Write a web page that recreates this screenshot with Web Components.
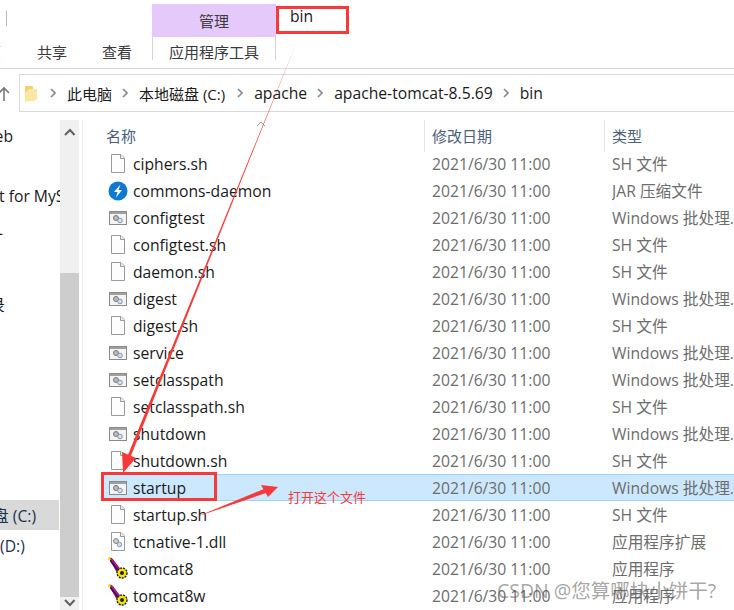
<!DOCTYPE html>
<html lang="zh">
<head>
<meta charset="utf-8">
<title>bin</title>
<style>
html, body { margin: 0; height: 610px; overflow: hidden; background: #fff; }
body { font: 15.7px "Open Sans", "Noto Sans CJK SC", sans-serif; color: #1a1a1a; position: relative; }
</style>
</head>
<body>
<explorer-ribbon></explorer-ribbon>
<explorer-address></explorer-address>
<explorer-main>
	<file-row icon="doc" type="SH 文件">ciphers.sh</file-row>
	<file-row icon="jar" type="JAR 压缩文件">commons-daemon</file-row>
	<file-row icon="bat" type="Windows 批处理...">configtest</file-row>
	<file-row icon="doc" type="SH 文件">configtest.sh</file-row>
	<file-row icon="doc" type="SH 文件">daemon.sh</file-row>
	<file-row icon="bat" type="Windows 批处理...">digest</file-row>
	<file-row icon="doc" type="SH 文件">digest.sh</file-row>
	<file-row icon="bat" type="Windows 批处理...">service</file-row>
	<file-row icon="bat" type="Windows 批处理...">setclasspath</file-row>
	<file-row icon="doc" type="SH 文件">setclasspath.sh</file-row>
	<file-row icon="bat" type="Windows 批处理...">shutdown</file-row>
	<file-row icon="doc" type="SH 文件">shutdown.sh</file-row>
	<file-row icon="bat" type="Windows 批处理..." selected>startup</file-row>
	<file-row icon="doc" type="SH 文件">startup.sh</file-row>
	<file-row icon="dll" type="应用程序扩展">tcnative-1.dll</file-row>
	<file-row icon="exe" type="应用程序">tomcat8</file-row>
	<file-row icon="exe" type="应用程序">tomcat8w</file-row>
</explorer-main>
<red-notes></red-notes>

<script>
const ribbonTemplate = document.createElement('template');
ribbonTemplate.innerHTML = `
<style>
:host { display: block; height: 68px; border-bottom: 1px solid #d9d9d9; overflow: hidden; }
.top { height: 37px; display: flex; }
.sep { width: 1px; height: 15px; background: #b8b8b8; margin: 11px 0 0 6px; }
.manage { width: 124px; height: 33px; margin: 4px 0 0 145px; background: #e6c9fb; color: #3a3a3a; font-size: 15px; text-align: center; line-height: 34px; }
.bin { width: 73px; height: 28px; margin: 6px 0 0 0; box-sizing: border-box; border: 3px solid #f63a3a; padding-left: 11px; line-height: 15px; }
.tabs { display: flex; height: 31px; font-size: 15px; color: #3a3a3a; line-height: 30px; }
.tabs span { white-space: nowrap; }
.home { width: 15px; margin-left: -14px; margin-right: 36px; }
.view { margin-left: 35px; }
.tools { margin-left: 20px; width: 122px; height: 23px; border: solid #d4d4d4; border-width: 0 1px; text-align: center; line-height: 30px; }
</style>
<div class="top">
	<div class="sep"></div>
	<div class="manage">管理</div>
	<div class="bin">bin</div>
</div>
<div class="tabs">
	<span class="home">页</span>
	<span>共享</span>
	<span class="view">查看</span>
	<span class="tools">应用程序工具</span>
</div>
`;

class ExplorerRibbon extends HTMLElement {
	connectedCallback() {
		this.attachShadow({ mode: 'open' }).appendChild(ribbonTemplate.content.cloneNode(true));
	}
}

const addressTemplate = document.createElement('template');
addressTemplate.innerHTML = `
<style>
:host { display: flex; height: 51px; box-sizing: border-box; padding-top: 5px; }
.up { width: 19px; flex: none; margin-top: 12px; }
.box { flex: 1; height: 38px; box-sizing: border-box; border: 1px solid #d9d9d9; border-right: 0; display: flex; align-items: center; padding-left: 5px; white-space: nowrap; }
.folder { flex: none; margin-right: 13px; }
.chev { flex: none; margin: 0 11px 0 10px; }
.chev:first-of-type { margin-left: 0; }
.cjk { font-size: 15px; }
.cjk + .chev + .cjk { padding-right: 2px; }
</style>
<svg class="up" width="19" height="16" viewBox="0 0 19 16"><path d="M4 15V2M-1 7l5-5 5 5" fill="none" stroke="#7a7a7a" stroke-width="1.6"/></svg>
<div class="box">
	<svg class="folder" width="12" height="17" viewBox="0 0 12 17"><path d="M0 1h7l1 1v14H0z" fill="#f2d26c"/><path d="M4 4h8v11l-12 2V8z" fill="#fbe6a2"/></svg>
	<span id="crumbs" style="display:contents"></span>
</div>
`;

class ExplorerAddress extends HTMLElement {
	connectedCallback() {
		const root = this.attachShadow({ mode: 'open' });
		root.appendChild(addressTemplate.content.cloneNode(true));
		const crumbs = root.querySelector('#crumbs');
		['此电脑', '本地磁盘 (C:)', 'apache', 'apache-tomcat-8.5.69', 'bin'].forEach((text, i) => {
			const chev = document.createElementNS('http://www.w3.org/2000/svg', 'svg');
			chev.setAttribute('class', 'chev');
			chev.setAttribute('width', '6');
			chev.setAttribute('height', '10');
			chev.innerHTML = '<path d="M1 1l4 4-4 4" fill="none" stroke="#8a8a8a" stroke-width="1.7"/>';
			crumbs.appendChild(chev);
			const label = document.createElement('span');
			if (i < 2) label.className = 'cjk';
			label.textContent = text;
			crumbs.appendChild(label);
		});
	}
}

const mainTemplate = document.createElement('template');
mainTemplate.innerHTML = `
<style>
:host { display: flex; height: 490px; overflow: hidden; }
.nav { width: 60px; flex: none; overflow: hidden; white-space: nowrap; position: relative; }
.nav div { height: 20px; line-height: 20px; display: flex; justify-content: flex-end; }
.nav .a { margin-top: 6px; width: 13px; }
.nav .b { margin-top: 40px; margin-left: -1px; width: 80px; justify-content: flex-start; }
.nav .c { margin-top: 20px; width: 3px; }
.nav .d { margin-top: 49px; width: 5px; }
.nav .sel { margin-top: 185px; height: 30px; line-height: 32px; background: #d9d9d9; width: 59px; justify-content: flex-start; color: #16324f; }
.nav .sel span { margin-left: -7px; }
.nav .e { margin-top: 6px; width: 59px; justify-content: flex-start; color: #16324f; }
.bar { width: 19px; flex: none; background: #f0f0f0; display: flex; flex-direction: column; align-items: center; }
.bar svg { flex: none; }
.thumb { width: 19px; height: 327px; margin-top: 130px; background: #cdcdcd; }
.edge { width: 3px; flex: none; }
.list { flex: 1; min-width: 0; border-left: 1px solid #eee; box-sizing: border-box; display: flex; flex-direction: column; position: relative; }
.head { height: 30px; flex: none; display: grid; grid-template-columns: 341px 180px 1fr; color: #4c607a; font-size: 15px; line-height: 32px; }
.head span { padding-left: 23px; white-space: nowrap; }
.head span + span { border-left: 1px solid #e5e5e5; padding-left: 7px; }
.caret { position: absolute; left: 173px; top: 1px; }
.rows { display: flex; flex-direction: column; padding-left: 19px; }
</style>
<div class="nav">
	<div class="a">eb</div>
	<div class="b">t for MyS</div>
	<div class="c">计</div>
	<div class="d">录</div>
	<div class="sel"><span>盘 (C:)</span></div>
	<div class="e">(D:)</div>
</div>
<div class="bar">
	<svg width="19" height="23" viewBox="0 0 19 23"><path d="M5 15l5-5 4.500 5" fill="none" stroke="#606060" stroke-width="2"/></svg>
	<div class="thumb"></div>
	<svg width="19" height="13" viewBox="0 0 19 13" style="margin-top:auto"><path d="M5 3l5 5 4.500-5" fill="none" stroke="#606060" stroke-width="2"/></svg>
</div>
<div class="edge"></div>
<div class="list">
	<svg class="caret" width="10" height="6" viewBox="0 0 10 6"><path d="M1 5l4-4 4 4" fill="none" stroke="#9a9a9a"/></svg>
	<div class="head"><span>名称</span><span>修改日期</span><span>类型</span></div>
	<div class="rows"><slot></slot></div>
</div>
`;

class ExplorerMain extends HTMLElement {
	connectedCallback() {
		this.attachShadow({ mode: 'open' }).appendChild(mainTemplate.content.cloneNode(true));
	}
}

const docShape = `<path d="M3.500.500h9.500l3.500 3.500v14.500h-13z" fill="#fdfdfd" stroke="#9a9a9a"/><path d="M12.500.500v4h4" fill="#eee" stroke="#9a9a9a"/>`;

const icons = {
	doc: docShape,
	jar: `<circle cx="10" cy="10" r="9.500" fill="#0f78d4"/><path d="M12.500 3.500L6 11h3.500L8 16.500 14 9h-3.500z" fill="#fff"/>`,
	bat: `<rect x="1.500" y="3.500" width="17" height="13" fill="#f4f4f4" stroke="#8a8a8a"/><rect x="2" y="4" width="16" height="2" fill="#a0a0a0"/><circle cx="8" cy="10" r="2.500" fill="#bbb" stroke="#777"/><circle cx="12" cy="12.500" r="2.300" fill="#cfe2f2" stroke="#7b98b5"/>`,
	dll: docShape + `<circle cx="8" cy="9" r="2.500" fill="#ccc" stroke="#888"/><circle cx="11.500" cy="12.500" r="2.200" fill="#cfe2f2" stroke="#7b98b5"/>`,
	exe: `<path d="M1-1l3 .5 8 10.500-3 3z" fill="#e8007a" stroke="#400040" stroke-width=".7"/><path d="M2.500 1.500l7.500 10" stroke="#30106a" stroke-width="1.800"/><path d="M0-1.500h2.500v2.500H0z" fill="#f5e500"/><circle cx="14" cy="14" r="5" fill="#f5e500" stroke="#222" stroke-width="1.400" stroke-dasharray="2 1"/><circle cx="14" cy="14" r="2" fill="#222"/>`
};

const rowTemplate = document.createElement('template');
rowTemplate.innerHTML = `
<style>
:host { display: block; }
.row { height: 27px; box-sizing: border-box; display: grid; grid-template-columns: 330px 180px 1fr; align-items: center; white-space: nowrap; color: #6d6d6d; border: solid transparent; border-width: 1px 0; }
:host([selected]) .row { background: #cce8ff; border-color: #99d1ff; }
.name { display: flex; align-items: center; color: #1a1a1a; padding-left: 6px; }
svg { flex: none; width: 20px; height: 20px; margin-right: 5px; overflow: visible; }
.type { overflow: hidden; }
</style>
<div class="row">
	<div class="name"><svg viewBox="0 0 20 20"></svg><slot></slot></div>
	<div class="date"></div>
	<div class="type"></div>
</div>
`;

class FileRow extends HTMLElement {
	connectedCallback() {
		const root = this.attachShadow({ mode: 'open' });
		root.appendChild(rowTemplate.content.cloneNode(true));
		root.querySelector('svg').innerHTML = icons[this.getAttribute('icon')] || icons.doc;
		root.querySelector('.date').textContent = this.getAttribute('date') || '2021/6/30 11:00';
		root.querySelector('.type').textContent = this.getAttribute('type');
	}
}

const notesTemplate = document.createElement('template');
notesTemplate.innerHTML = `
<style>
:host { display: block; position: absolute; inset: 0; pointer-events: none; }
svg { position: absolute; left: 0; top: 0; }
.tip { position: absolute; left: 288px; top: 488px; font-size: 13px; color: #f63a3a; line-height: 18px; }
.mark { position: absolute; left: 497px; top: 578px; font-size: 19.5px; line-height: 26px; color: rgba(90, 90, 90, .55); white-space: nowrap; }
</style>
<svg width="734" height="610" viewBox="0 0 734 610">
	<path d="M296 44L127.500 456 130.500 457z" fill="#f63a3a"/>
	<path d="M123 473l-1-21 14 6z" fill="#f63a3a"/>
	<path d="M196 517L264 489 266 493z" fill="#f63a3a"/>
	<path d="M278 487L261 485 268 497z" fill="#f63a3a"/>
	<rect x="102.500" y="473.500" width="113" height="26" fill="none" stroke="#f63a3a" stroke-width="3"/>
</svg>
<div class="tip">打开这个文件</div>
<div class="mark">CSDN @您算哪块小饼干?</div>
`;

class RedNotes extends HTMLElement {
	connectedCallback() {
		this.attachShadow({ mode: 'open' }).appendChild(notesTemplate.content.cloneNode(true));
	}
}

customElements.define('explorer-ribbon', ExplorerRibbon);
customElements.define('explorer-address', ExplorerAddress);
customElements.define('explorer-main', ExplorerMain);
customElements.define('file-row', FileRow);
customElements.define('red-notes', RedNotes);
</script>
</body>
</html>
